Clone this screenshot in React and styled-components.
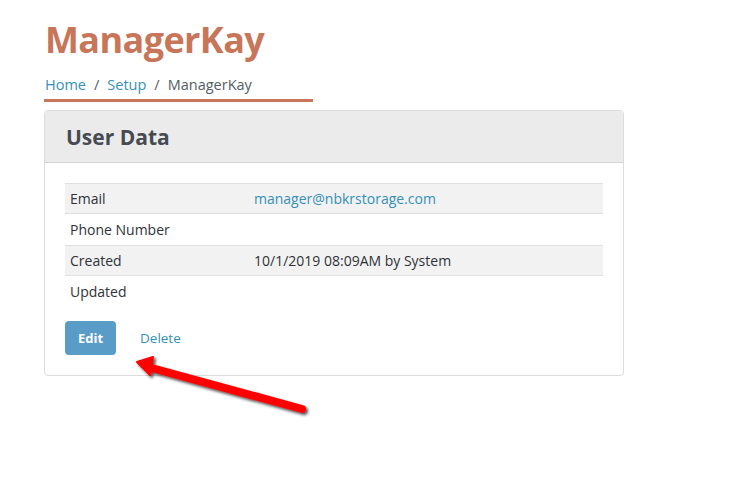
import React from "react"
import styled, { createGlobalStyle } from "styled-components"

const GlobalStyle = createGlobalStyle`
  body {
    margin: 0;
    background: #fff;
    font-family: "Open Sans", "Noto Sans", sans-serif;
  }
`

const Page = styled.div`
  position: relative;
  width: 743px;
  height: 485px;
  padding: 15px 0 0 44px;
  box-sizing: border-box;
  overflow: hidden;
`

const Title = styled.h1`
  margin: 0 0 0 1px;
  font-size: 36px;
  line-height: 49px;
  font-weight: 700;
  color: #c8765a;
  letter-spacing: -0.6px;
`

const Crumbs = styled.nav`
  display: flex;
  align-items: center;
  gap: 8px;
  width: 269px;
  height: 38px;
  padding: 5px 0 0 1px;
  box-sizing: border-box;
  font-size: 14.5px;
  color: #555c63;
  border-bottom: 3px solid #c8765a;
`

const Crumb = styled.span`
  color: ${(p) => (p.link ? "#3590b6" : "#555c63")};
`

const Card = styled.section`
  width: 580px;
  margin-top: 8px;
  border: 1px solid #dcdcdc;
  border-radius: 4px;
  box-sizing: border-box;
`

const CardHeader = styled.header`
  height: 51px;
  display: flex;
  align-items: center;
  padding-left: 21px;
  background: #ebebeb;
  border-bottom: 1px solid #d4d4d4;
  border-radius: 4px 4px 0 0;
  font-size: 21px;
  font-weight: 700;
  color: #464b52;
`

const CardBody = styled.div`
  padding: 20px 20px 20px 20px;
`

const Table = styled.div`
  display: grid;
  grid-template-columns: 184px 1fr;
`

const Cell = styled.div`
  height: 31px;
  display: flex;
  align-items: center;
  padding-left: 5px;
  box-sizing: border-box;
  font-size: 14px;
  color: ${(p) => (p.link ? "#3590b6" : "#2f3338")};
  background: ${(p) => (p.shaded ? "#f2f2f2" : "#fff")};
  border-top: ${(p) => (p.shaded ? "1px solid #dfdfe3" : "none")};
  border-bottom: ${(p) => (p.shaded ? "1px solid #dfdfe3" : "none")};
`

const Actions = styled.div`
  display: flex;
  align-items: center;
  gap: 24px;
  margin-top: 14px;
`

const EditButton = styled.button`
  width: 51px;
  height: 34px;
  border: none;
  border-radius: 4px;
  background: #5a9cc8;
  color: #fff;
  font-family: inherit;
  font-size: 13px;
  font-weight: 700;
`

const DeleteLink = styled.a`
  font-size: 13.5px;
  color: #3590b6;
`

const Arrow = styled.svg`
  position: absolute;
  left: 120px;
  top: 345px;
  overflow: visible;
`

const rows = [
  ["Email", "manager@nbkrstorage.com", true],
  ["Phone Number", "", false],
  ["Created", "10/1/2019 08:09AM by System", true],
  ["Updated", "", false],
]

export default function App() {
  return (
    <Page>
      <GlobalStyle />
      <Title>ManagerKay</Title>
      <Crumbs>
        <Crumb link>Home</Crumb>
        <Crumb>/</Crumb>
        <Crumb link>Setup</Crumb>
        <Crumb>/</Crumb>
        <Crumb>ManagerKay</Crumb>
      </Crumbs>
      <Card>
        <CardHeader>User Data</CardHeader>
        <CardBody>
          <Table>
            {rows.map(([label, value, shaded], i) => (
              <React.Fragment key={label}>
                <Cell shaded={shaded}>{label}</Cell>
                <Cell shaded={shaded} link={i === 0}>
                  {value}
                </Cell>
              </React.Fragment>
            ))}
          </Table>
          <Actions>
            <EditButton>Edit</EditButton>
            <DeleteLink>Delete</DeleteLink>
          </Actions>
        </CardBody>
      </Card>
      <Arrow width="200" height="80" viewBox="0 0 200 80">
        <defs>
          <filter id="shadow" x="-20%" y="-50%" width="140%" height="200%">
            <feDropShadow dx="2" dy="2" stdDeviation="1.5" floodColor="#000" floodOpacity="0.7" />
          </filter>
        </defs>
        <g filter="url(#shadow)">
          <line x1="182" y1="64" x2="28" y2="22" stroke="#ff0000" strokeWidth="8" strokeLinecap="round" />
          <polygon points="17,17 33,12 30,30" fill="#ff0000" stroke="#ff0000" strokeWidth="2" strokeLinejoin="round" />
        </g>
      </Arrow>
    </Page>
  )
}
